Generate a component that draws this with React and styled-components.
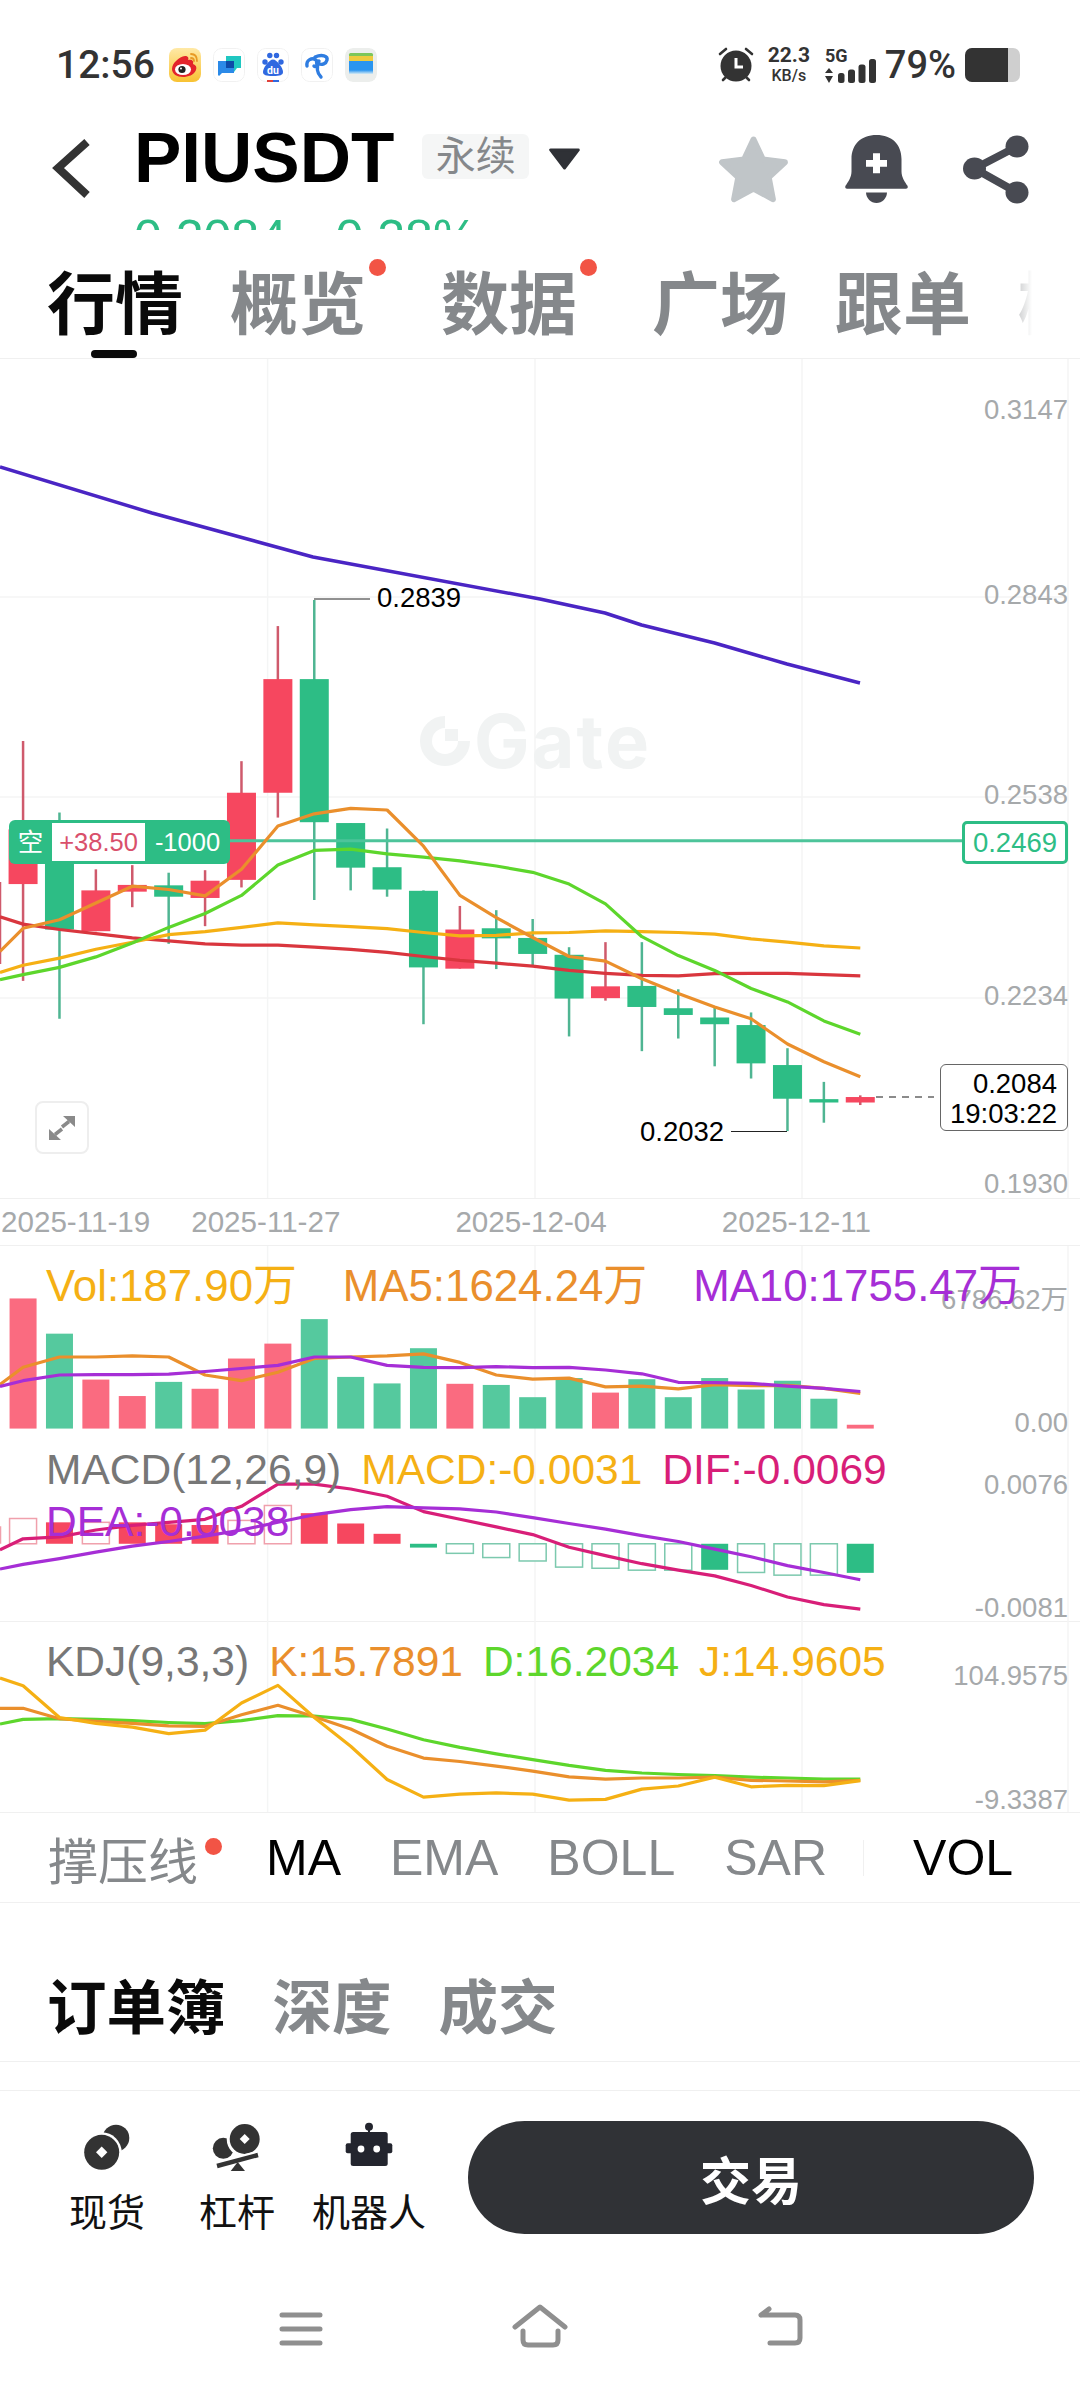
import styled, { createGlobalStyle } from 'styled-components'

const GlobalStyle = createGlobalStyle`
  html, body { margin: 0; padding: 0; background: #fff; }
  body { font-family: "Liberation Sans", "Noto Sans CJK SC", sans-serif; }
  * { box-sizing: border-box; }
`

const GREEN = '#2dbd85'
const RED = '#f6475f'
const ORANGE = '#ea8f2c'
const YELLOW = '#f5b014'
const LIME = '#5dd62c'
const PURPLE = '#a62ed6'
const MAGENTA = '#d81e78'
const GRID = '#f4f5f5'

// candle centres are evenly spaced, y values are read off the reference
const cx = (i) => 23.07 + 36.4 * i
const mainY = (v) => 560 + v / 2.376
const lowerY = (v) => 1220 + v / 2.613

const linePath = (first, ys, toY) =>
  `M0 ${toY(first)} ` + ys.map((v, i) => `L${cx(i).toFixed(1)} ${toY(v).toFixed(1)}`).join(' ')

// [high, bodyTop, bodyBottom, low, up]
const candles = [
  [430, 640, 770, 1000, 1],
  [600, 700, 878, 1090, 0],
  [735, 785, 882, 882, 1],
  [725, 772, 788, 825, 1],
  [743, 773, 800, 912, 0],
  [737, 762, 803, 870, 1],
  [478, 553, 760, 778, 1],
  [157, 283, 553, 612, 1],
  [95, 283, 623, 808, 0],
  [625, 625, 731, 785, 0],
  [638, 730, 783, 800, 0],
  [785, 786, 968, 1103, 0],
  [822, 878, 971, 971, 1],
  [832, 875, 899, 972, 0],
  [853, 898, 936, 965, 0],
  [920, 938, 1042, 1132, 0],
  [908, 1013, 1041, 1047, 1],
  [908, 1012, 1062, 1167, 0],
  [1020, 1065, 1081, 1137, 0],
  [1062, 1087, 1103, 1203, 0],
  [1075, 1105, 1196, 1232, 0],
  [1160, 1200, 1280, 1357, 0],
  [1240, 1281, 1289, 1337, 0],
  [1272, 1276, 1289, 1295, 1],
]

const mainLines = [
  { color: '#d9363e', first: 848, ys: [865, 878, 888, 898, 905, 912, 915, 915, 920, 925, 932, 942, 951, 958, 965, 975, 982, 987, 988, 983, 982, 982, 985, 988] },
  { color: YELLOW, first: 980, ys: [963, 946, 925, 908, 890, 883, 873, 862, 867, 871, 876, 885, 893, 892, 886, 885, 881, 883, 885, 889, 900, 908, 917, 922] },
  { color: LIME, first: 997, ys: [985, 968, 943, 910, 873, 840, 797, 725, 690, 687, 698, 706, 715, 727, 742, 770, 817, 895, 940, 975, 1018, 1050, 1095, 1127] },
  { color: ORANGE, first: 930, ys: [875, 855, 815, 775, 783, 798, 735, 632, 603, 590, 594, 680, 797, 850, 897, 942, 953, 995, 1030, 1062, 1090, 1150, 1192, 1228] },
]

const volTops = [205, 297, 417, 460, 423, 441, 362, 323, 259, 410, 427, 335, 428, 431, 463, 413, 451, 416, 463, 413, 443, 420, 467, 535]
const volRed = [0, 2, 3, 5, 6, 7, 12, 16, 23]
const volLines = [
  { color: ORANGE, first: 430, ys: [385, 358, 358, 355, 358, 405, 420, 398, 362, 358, 355, 350, 372, 405, 416, 413, 436, 434, 441, 430, 433, 432, 440, 453] },
  { color: PURPLE, first: 435, ys: [420, 405, 404, 404, 403, 396, 388, 380, 358, 358, 380, 385, 386, 383, 386, 385, 392, 402, 424, 425, 427, 434, 440, 448] },
]

// [edge, hollow]: edge is the end of the bar away from the zero line
const macdBars = [
  [780, 1], [790, 0], [790, 1], [790, 0], [795, 0], [797, 0], [785, 1], [746, 1], [766, 0], [793, 0], [820, 0],
  [856, 0], [871, 1], [882, 1], [891, 1], [907, 1], [910, 1], [915, 1], [915, 1], [914, 0], [921, 1], [928, 1], [928, 1], [922, 0],
]
const macdLines = [
  { color: MAGENTA, first: 862, ys: [833, 828, 810, 798, 790, 782, 748, 690, 690, 703, 722, 762, 782, 802, 822, 855, 877, 898, 915, 930, 955, 985, 1005, 1017] },
  { color: PURPLE, first: 912, ys: [900, 885, 868, 852, 840, 826, 810, 790, 770, 757, 749, 752, 755, 763, 778, 793, 808, 825, 840, 860, 880, 903, 921, 940] },
]
const kdjLines = [
  { color: LIME, first: 1317, ys: [1305, 1303, 1305, 1308, 1313, 1316, 1308, 1295, 1296, 1305, 1330, 1358, 1378, 1395, 1410, 1425, 1438, 1445, 1449, 1452, 1456, 1458, 1461, 1461] },
  { color: ORANGE, first: 1276, ys: [1276, 1303, 1310, 1315, 1322, 1323, 1293, 1268, 1298, 1330, 1375, 1406, 1415, 1427, 1440, 1455, 1461, 1458, 1458, 1456, 1464, 1466, 1468, 1464] },
  { color: YELLOW, first: 1197, ys: [1217, 1300, 1315, 1325, 1342, 1333, 1262, 1216, 1300, 1375, 1462, 1508, 1500, 1497, 1500, 1516, 1514, 1487, 1479, 1456, 1481, 1477, 1478, 1465] },
]

const Page = styled.div`
  width: 1080px;
  height: 2392px;
  overflow: hidden;
  display: flex;
  flex-direction: column;
  background: #fff;
`

/* status bar */
const StatusBar = styled.div`
  height: 120px;
  padding: 10px 60px 0 56px;
  display: flex;
  align-items: center;
  color: #333;
  font-family: Roboto, sans-serif;
`
const Clock = styled.span`
  font-size: 39px;
  font-weight: 500;
  margin-right: 14px;
`
const AppIcons = styled.div`
  display: flex;
  gap: 12px;
`
const AppIcon = styled.svg`
  width: 32px;
  height: 34px;
  border-radius: 8px;
`
const StatusRight = styled.div`
  margin-left: auto;
  display: flex;
  align-items: center;
`
const NetSpeed = styled.div`
  margin: 0 15px 0 14px;
  width: 42px;
  display: flex;
  flex-direction: column;
  align-items: center;
  font-weight: 700;
`
const SpeedValue = styled.span`
  font-size: 21px;
  line-height: 22px;
`
const SpeedUnit = styled.span`
  font-size: 16px;
  line-height: 20px;
  font-weight: 500;
`
const Battery = styled.div`
  width: 55px;
  height: 34px;
  border-radius: 7px;
  overflow: hidden;
  display: flex;
  background: #cfcfcf;
`
const BatteryFill = styled.div`
  width: 43px;
  background: #333;
`
const Percent = styled.span`
  font-size: 38px;
  font-weight: 500;
  margin: 0 9px 0 9px;
`

/* header */
const Header = styled.div`
  height: 110px;
  overflow: hidden;
  padding-left: 52px;
`
const TitleRow = styled.div`
  height: 93px;
  display: flex;
  align-items: flex-start;
`
const BackIcon = styled.svg`
  width: 40px;
  height: 64px;
  margin: 17px 42px 0 0;
`
const Title = styled.h1`
  margin: 2px 0 0;
  font-size: 71px;
  line-height: 71px;
  font-weight: 700;
  color: #000;
`
const Badge = styled.span`
  margin: 14px 0 0 28px;
  width: 107px;
  height: 45px;
  border-radius: 6px;
  background: #f5f6f6;
  color: #85888b;
  font-size: 40px;
  line-height: 45px;
  text-align: center;
`
const Caret = styled.svg`
  width: 33px;
  height: 22px;
  margin: 28px 0 0 19px;
`
const HeaderIcons = styled.div`
  margin: 15px 51px 0 auto;
  display: flex;
  gap: 55px;
`
const PriceRow = styled.div`
  display: flex;
  font-size: 50px;
  line-height: 50px;
  color: ${GREEN};
  padding-left: 82px;
  gap: 32px;
`

/* tabs */
const Tabs = styled.div`
  position: relative;
  height: 129px;
  padding: 41px 0 0 47px;
  display: flex;
  gap: 47px;
  overflow: hidden;
  border-bottom: 1px solid #f0f0f0;
`
const Tab = styled.span`
  position: relative;
  font-size: 68px;
  line-height: 68px;
  font-weight: 700;
  white-space: nowrap;
  color: ${(p) => (p.$active ? '#0a0a0a' : '#85888b')};
  padding-right: ${(p) => (p.$dot ? 28 : 0)}px;
`
const Dot = styled.i`
  position: absolute;
  top: ${(p) => p.$top}px;
  right: ${(p) => p.$right}px;
  width: 17px;
  height: 17px;
  border-radius: 50%;
  background: #f25445;
`
const Underline = styled.i`
  position: absolute;
  left: 91px;
  bottom: 0;
  width: 46px;
  height: 8px;
  border-radius: 4px;
  background: #0a0a0a;
`
const TabFade = styled.i`
  position: absolute;
  top: 0;
  bottom: 0;
  right: 0;
  width: 62px;
  background: linear-gradient(to right, rgba(255, 255, 255, 0.6), #fff 14px);
`

/* chart panes */
const Pane = styled.div`
  position: relative;
  height: ${(p) => p.$height}px;
  border-bottom: ${(p) => (p.$line ? `1px solid #f0f0f0` : 'none')};
`
const PaneSvg = styled.svg`
  position: absolute;
  left: 0;
  top: 0;
`
const AxisLabel = styled.span`
  position: absolute;
  right: 12px;
  top: ${(p) => p.$y}px;
  transform: translateY(-50%);
  font-size: 27.5px;
  line-height: 30px;
  color: #a6a9ab;
  white-space: nowrap;
`
const Extreme = styled.span`
  position: absolute;
  left: ${(p) => p.$x}px;
  top: ${(p) => p.$y}px;
  transform: translateY(-50%);
  font-size: 27.5px;
  line-height: 30px;
  color: #000;
`
const PositionTag = styled.div`
  position: absolute;
  left: 9px;
  top: 461px;
  width: 221px;
  height: 44px;
  padding: 3px 0;
  display: flex;
  border-radius: 6px;
  background: ${GREEN};
  color: #fff;
  font-size: 25.5px;
  line-height: 38px;
  text-align: center;
`
const TagSide = styled.span`
  width: 43px;
`
const TagPnl = styled.span`
  width: 93px;
  background: #fff;
  color: #d9506b;
`
const TagQty = styled.span`
  flex: 1;
`
const PriceTag = styled.div`
  position: absolute;
  left: 962px;
  top: 462px;
  width: 106px;
  height: 43px;
  border: 3px solid ${GREEN};
  border-radius: 5px;
  background: #fff;
  color: ${GREEN};
  font-size: 27.5px;
  line-height: 37px;
  text-align: center;
`
const LastPrice = styled.div`
  position: absolute;
  left: 940px;
  top: 705px;
  width: 128px;
  height: 67px;
  padding: 4px 10px 0 0;
  border: 1.5px solid #666;
  border-radius: 6px;
  background: #fff;
  color: #000;
  font-size: 27.5px;
  line-height: 29.5px;
  text-align: right;
`
const ExpandButton = styled.div`
  position: absolute;
  left: 35px;
  top: 742px;
  width: 54px;
  height: 53px;
  display: flex;
  align-items: center;
  justify-content: center;
  border: 2px solid #eeeeee;
  border-radius: 8px;
  background: #fff;
`
const Watermark = styled.div`
  position: absolute;
  left: 418px;
  top: 355px;
  display: flex;
  align-items: center;
  font-family: Inter, sans-serif;
  font-weight: 700;
  font-size: 74px;
  letter-spacing: 2px;
  line-height: 54px;
  color: #f1f3f3;
`
const DateRow = styled.div`
  height: 48px;
  padding: 3px 0 0 1px;
  display: flex;
  gap: 115px;
  border-top: 1px solid #f0f0f0;
  border-bottom: 1px solid #f0f0f0;
  font-size: 29.6px;
  line-height: 40px;
  color: #a6a9ab;
  white-space: nowrap;
  & > span:first-child {
    margin-right: -74px;
  }
`
const Legend = styled.div`
  position: relative;
  width: ${(p) => (p.$wide ? 1080 : 900)}px;
  padding: ${(p) => p.$top}px 0 0 46px;
  display: flex;
  flex-wrap: ${(p) => (p.$wide ? 'nowrap' : 'wrap')};
  column-gap: ${(p) => p.$gap}px;
  font-size: ${(p) => (p.$wide ? 43.8 : 42.5)}px;
  line-height: 52px;
  white-space: nowrap;
`
const LegendItem = styled.span`
  color: ${(p) => p.$color};
`

/* indicator switcher */
const IndicatorRow = styled.div`
  height: 91px;
  padding-left: 48px;
  display: flex;
  align-items: center;
  gap: 49px;
  border-top: 1px solid #f0f0f0;
  border-bottom: 1px solid #f0f0f0;
  font-size: 50px;
`
const Indicator = styled.span`
  position: relative;
  color: ${(p) => (p.$active ? '#000' : '#85888b')};
  margin-right: ${(p) => (p.$first ? 19 : 0)}px;
`
const Divider = styled.i`
  width: 1px;
  height: 36px;
  margin-left: -13px;
  background: #f0f0f0;
`

/* order book tabs */
const OrderTabs = styled.div`
  height: 159px;
  padding: 41px 0 0 47px;
  display: flex;
  align-items: center;
  gap: 47px;
  border-bottom: 1px solid #f0f0f0;
  font-size: 59.5px;
  font-weight: 700;
`
const OrderTab = styled.span`
  color: ${(p) => (p.$active ? '#0a0a0a' : '#85888b')};
`
const Spacer = styled.div`
  height: 29px;
  border-bottom: 1px solid #f0f0f0;
`

/* bottom actions */
const BottomBar = styled.div`
  height: 199px;
  padding: 30px 0 0 42px;
  display: flex;
  align-items: flex-start;
`
const ActionGrid = styled.div`
  display: grid;
  grid-template-columns: 130px 130px 134px;
`
const Action = styled.div`
  display: flex;
  flex-direction: column;
  align-items: center;
  font-size: 38px;
  line-height: 38px;
  color: #111;
  gap: 19px;
`
const ActionIcon = styled.svg`
  width: 60px;
  height: 54px;
`
const TradeButton = styled.button`
  margin-left: 32px;
  width: 566px;
  height: 113px;
  border: 0;
  border-radius: 57px;
  background: #303236;
  color: #fff;
  font-family: inherit;
  font-size: 51px;
  font-weight: 700;
`

/* system nav */
const NavBar = styled.div`
  height: 102px;
  padding: 14px 0 0 278px;
  display: flex;
  gap: 188px;
`
const NavIcon = styled.svg`
  height: 46px;
  width: ${(p) => p.$width}px;
  fill: none;
  stroke: #8f8f8f;
  stroke-width: 5;
  stroke-linecap: round;
  stroke-linejoin: round;
`

function VerticalGrid({ top, bottom }) {
  return [267.6, 535, 802, 1068].map((x) => (
    <line key={x} x1={x} x2={x} y1={top} y2={bottom} stroke={GRID} strokeWidth="1.5" />
  ))
}

function Series({ lines, toY }) {
  return lines.map((l) => (
    <path key={l.color} d={linePath(l.first, l.ys, toY)} fill="none" stroke={l.color} strokeWidth="3.2" strokeLinejoin="round" />
  ))
}

function MainChart() {
  return (
    <PaneSvg width="1080" height="839" viewBox="0 359 1080 839">
      <VerticalGrid top={359} bottom={1198} />
      {[597, 797, 998].map((y) => (
        <line key={y} x1="0" x2="1068" y1={y} y2={y} stroke={GRID} strokeWidth="1.5" />
      ))}
      <line x1="0" x2="0" y1={mainY(765)} y2={mainY(960)} stroke="#cf5a6c" strokeWidth="2.5" />
      {candles.map(([high, top, bottom, low, up], i) => {
        const color = up ? RED : GREEN
        return (
          <g key={i}>
            <line x1={cx(i)} x2={cx(i)} y1={mainY(high)} y2={mainY(low)} stroke={up ? '#cf5a6c' : '#4fb592'} strokeWidth="2.5" />
            <rect x={cx(i) - 14.5} width="29" y={mainY(top)} height={(bottom - top) / 2.376} fill={color} />
          </g>
        )
      })}
      <line x1="230" x2="962" y1="840.7" y2="840.7" stroke="#4dc49a" strokeWidth="3" />
      <path d="M0 467 L152 513 L313 557 L540 599 L605 613 L641.6 625 L714.6 643 L787 664 L860 683" fill="none" stroke="#4a25c4" strokeWidth="3.5" strokeLinejoin="round" />
      <Series lines={mainLines} toY={mainY} />
      <path d="M314 599 H370 M731 1131.5 H787" stroke="#222" strokeWidth="1" fill="none" />
      <line x1="876" x2="934" y1="1097" y2="1097" stroke="#666" strokeWidth="1.5" strokeDasharray="7 6" />
    </PaneSvg>
  )
}

function VolChart() {
  const base = lowerY(545)
  return (
    <PaneSvg width="1080" height="194" viewBox="0 1246 1080 194">
      <VerticalGrid top={1246} bottom={1440} />
      {volTops.map((t, i) => (
        <rect key={i} x={cx(i) - 13.5} width="27" y={lowerY(t)} height={base - lowerY(t)} fill={volRed.includes(i) ? '#fa6b80' : '#55c99e'} />
      ))}
      <Series lines={volLines} toY={lowerY} />
    </PaneSvg>
  )
}

function MacdChart() {
  const zero = lowerY(846)
  return (
    <PaneSvg width="1080" height="182" viewBox="0 1440 1080 182">
      <VerticalGrid top={1440} bottom={1622} />
      {macdBars.map(([edge, hollow], i) => {
        const y = lowerY(edge)
        const up = y < zero
        const color = up ? RED : GREEN
        return (
          <rect
            key={i}
            x={cx(i) - 13.5}
            width="27"
            y={Math.min(y, zero)}
            height={Math.abs(y - zero)}
            fill={hollow ? '#fff' : color}
            stroke={hollow ? (up ? '#f0a0ac' : '#7cc9ae') : 'none'}
            strokeWidth="1.5"
          />
        )
      })}
      <line x1="0.5" x2="0.5" y1={lowerY(800)} y2={zero} stroke="#f0a0ac" strokeWidth="1.5" />
      <Series lines={macdLines} toY={lowerY} />
    </PaneSvg>
  )
}

function KdjChart() {
  return (
    <PaneSvg width="1080" height="190" viewBox="0 1622 1080 190">
      <VerticalGrid top={1622} bottom={1812} />
      <Series lines={kdjLines} toY={lowerY} />
    </PaneSvg>
  )
}

function WeiboIcon() {
  return (
    <AppIcon viewBox="0 0 32 34">
      <defs>
        <linearGradient id="wb" x1="0" y1="0" x2="0" y2="1">
          <stop offset="0" stopColor="#ffe9a6" />
          <stop offset="1" stopColor="#f8c232" />
        </linearGradient>
      </defs>
      <rect width="32" height="34" fill="url(#wb)" />
      <path d="M3 21 C3 15 10 9 16 8 C19 8 20 10 19 12 C23 11 25 13 24 16 C27 17 28 19 27 22 C25 27 19 29 14 29 C8 29 3 26 3 21Z" fill="#e3242b" />
      <ellipse cx="14" cy="21.5" rx="8" ry="5.5" fill="#fff" />
      <circle cx="13" cy="21.5" r="3.6" fill="#222" />
      <circle cx="12" cy="20.5" r="1" fill="#fff" />
      <path d="M22 6 C26 6 28 9 28 13 M22 10 C24 10 25 11 25 13" fill="none" stroke="#e89a25" strokeWidth="1.8" strokeLinecap="round" />
    </AppIcon>
  )
}

function ChatIcon() {
  return (
    <AppIcon viewBox="0 0 32 34">
      <rect x="0.5" y="0.5" width="31" height="33" rx="8" fill="#fff" stroke="#f1f1f1" />
      <path d="M13 8 H28 V20 H24 L21 24 V20 H13Z" fill="#1fc7c1" />
      <path d="M5 13 H21 V25 H9 L6 28 L5 27Z" fill="#2b8ae8" />
      <rect x="13" y="13" width="8" height="7" fill="#0d4aa8" />
    </AppIcon>
  )
}

function BaiduIcon() {
  return (
    <AppIcon viewBox="0 0 32 34">
      <rect x="0.5" y="0.5" width="31" height="33" rx="8" fill="#fff" stroke="#f1f1f1" />
      <circle cx="8" cy="14" r="2.7" fill="#3068e0" />
      <circle cx="12.8" cy="7.5" r="2.7" fill="#3068e0" />
      <circle cx="19.5" cy="7.5" r="2.7" fill="#3068e0" />
      <circle cx="24" cy="14" r="2.7" fill="#3068e0" />
      <path d="M16 11.5 C20 11.5 26 20 26 24 C26 27 23 28 16 28 C9 28 6 27 6 24 C6 20 12 11.5 16 11.5Z" fill="#3068e0" />
      <text x="16" y="25.5" textAnchor="middle" fontSize="10.5" fontWeight="700" fill="#fff">du</text>
      <rect x="10" y="32" width="6" height="2" fill="#e0403a" />
      <rect x="16" y="32" width="6" height="2" fill="#3068e0" />
    </AppIcon>
  )
}

function TelecomIcon() {
  return (
    <AppIcon viewBox="0 0 32 34">
      <rect x="0.5" y="0.5" width="31" height="33" rx="8" fill="#fff" stroke="#f1f1f1" />
      <path d="M6 18 C5 12 11 9 15 12 C18 15 15 20 13 18 M14 9 C21 6 27 8 26 12 C25 16 21 17 18 16 M18 13 C15 20 16 25 20 29" fill="none" stroke="#2f7de1" strokeWidth="3.4" strokeLinecap="round" />
    </AppIcon>
  )
}

function WalletIcon() {
  return (
    <AppIcon viewBox="0 0 32 34">
      <defs>
        <linearGradient id="wl" x1="0" y1="0" x2="0" y2="1">
          <stop offset="0" stopColor="#2a95f0" />
          <stop offset="0.7" stopColor="#2a95f0" />
          <stop offset="1" stopColor="#d5ebf5" />
        </linearGradient>
      </defs>
      <rect width="32" height="34" rx="8" fill="#eceeec" />
      <rect x="4" y="5" width="24" height="5" rx="1.5" fill="#7dc65a" />
      <rect x="4" y="8" width="24" height="6" fill="#eecb3e" />
      <rect x="4" y="13" width="24" height="13" fill="url(#wl)" />
    </AppIcon>
  )
}

function AlarmIcon() {
  return (
    <svg width="36" height="36" viewBox="0 0 36 36">
      <circle cx="18" cy="19" r="15.5" fill="#333" />
      <path d="M18 11 V20 H25" fill="none" stroke="#fff" strokeWidth="3" />
      <path d="M2 7 L8 2 M34 7 L28 2 M5 33 L8 30 M31 33 L28 30" stroke="#333" strokeWidth="2.6" strokeLinecap="round" />
    </svg>
  )
}

function SignalIcon() {
  return (
    <svg width="51" height="36" viewBox="0 0 51 36">
      <text x="0" y="15" fontFamily="Roboto, sans-serif" fontSize="18" fontWeight="700" fill="#333">5G</text>
      <path d="M4 21 L8 26 H0Z M4 36 L0 29 H8Z" fill="#333" />
      <rect x="13" y="26" width="6.5" height="10" rx="2.5" fill="#333" />
      <rect x="23" y="22.5" width="7" height="13.5" rx="2.5" fill="#333" />
      <rect x="33.5" y="17.5" width="7" height="18.5" rx="2.5" fill="#333" />
      <rect x="44" y="12" width="7" height="24" rx="2.5" fill="#333" />
    </svg>
  )
}

function StarIcon() {
  return (
    <svg width="73" height="69" viewBox="0 3.5 73 67">
      <path
        d="M36.5 7 L45.9 27.1 L67.9 29.8 L51.7 44.9 L55.9 66.7 L36.5 56 L17.1 66.7 L21.3 44.9 L5.1 29.8 L27.1 27.1Z"
        fill="#c0c5c8"
        stroke="#c0c5c8"
        strokeWidth="6"
        strokeLinejoin="round"
      />
    </svg>
  )
}

function BellIcon() {
  return (
    <svg width="63" height="69" viewBox="0 0 63 72" preserveAspectRatio="none">
      <path d="M31.5 0 C16 0 6.5 10 6.5 25 V38 C6.5 44 3 49 0.5 53 Q-0.5 56 2 56 H61 Q63.5 56 62.5 53 C60 49 56.5 44 56.5 38 V25 C56.5 10 47 0 31.5 0Z" fill="#484a52" />
      <path d="M21 60 H42 C42 66 37 71 31.5 71 C26 71 21 66 21 60Z" fill="#484a52" />
      <path d="M21 29.5 H42 M31.5 19 V40" stroke="#fff" strokeWidth="7" />
    </svg>
  )
}

function ShareIcon() {
  return (
    <svg width="66" height="69" viewBox="0 0 66 72" preserveAspectRatio="none">
      <path d="M54 12 L11.5 35 L54 60" fill="none" stroke="#484a52" strokeWidth="8" />
      <circle cx="54" cy="12" r="11.5" fill="#484a52" />
      <circle cx="11.5" cy="35" r="11.5" fill="#484a52" />
      <circle cx="54" cy="60" r="11.5" fill="#484a52" />
    </svg>
  )
}

function SpotIcon() {
  return (
    <ActionIcon viewBox="0 0 60 54">
      <circle cx="39" cy="17" r="13.3" fill="#333" />
      <circle cx="24.7" cy="31.3" r="20" fill="#fff" />
      <circle cx="24.7" cy="31.3" r="17.5" fill="#333" />
      <path d="M24.7 25.6 L30.4 31.3 L24.7 37 L19 31.3Z" fill="#fff" />
    </ActionIcon>
  )
}

function LeverIcon() {
  return (
    <ActionIcon viewBox="0 0 60 54">
      <circle cx="16.3" cy="27.3" r="10.5" fill="#333" />
      <circle cx="37.7" cy="18" r="18" fill="#fff" />
      <circle cx="37.7" cy="18" r="15" fill="#333" />
      <path d="M37.7 13 L42.7 18 L37.7 23 L32.7 18Z" fill="#fff" />
      <path d="M6 46 L55 33" stroke="#fff" strokeWidth="9" />
      <path d="M10 45 L51 34" stroke="#333" strokeWidth="4.5" />
      <path d="M23.7 50 H38 L30.7 41Z" fill="#333" />
    </ActionIcon>
  )
}

function RobotIcon() {
  return (
    <ActionIcon viewBox="0 0 60 54">
      <circle cx="30" cy="5.7" r="4" fill="#23252e" />
      <rect x="29" y="6" width="2" height="6" fill="#23252e" />
      <rect x="11.7" y="11" width="37" height="34" rx="2.5" fill="#23252e" />
      <rect x="6.7" y="22.3" width="46.6" height="10" rx="2" fill="#23252e" />
      <circle cx="22" cy="28" r="3.4" fill="#fff" />
      <circle cx="37.7" cy="28" r="3.4" fill="#fff" />
    </ActionIcon>
  )
}

export default function App() {
  return (
    <Page>
      <GlobalStyle />
      <StatusBar>
        <Clock>12:56</Clock>
        <AppIcons>
          <WeiboIcon />
          <ChatIcon />
          <BaiduIcon />
          <TelecomIcon />
          <WalletIcon />
        </AppIcons>
        <StatusRight>
          <AlarmIcon />
          <NetSpeed>
            <SpeedValue>22.3</SpeedValue>
            <SpeedUnit>KB/s</SpeedUnit>
          </NetSpeed>
          <SignalIcon />
          <Percent>79%</Percent>
          <Battery>
            <BatteryFill />
          </Battery>
        </StatusRight>
      </StatusBar>

      <Header>
        <TitleRow>
          <BackIcon viewBox="0 0 40 64">
            <path d="M35 5 L6 31 L35 58" fill="none" stroke="#333" strokeWidth="8" />
          </BackIcon>
          <Title>PIUSDT</Title>
          <Badge>永续</Badge>
          <Caret viewBox="0 0 33 23">
            <path d="M2 2 H31 L16.5 21Z" fill="#2f3136" stroke="#2f3136" strokeWidth="3" strokeLinejoin="round" />
          </Caret>
          <HeaderIcons>
            <StarIcon />
            <BellIcon />
            <ShareIcon />
          </HeaderIcons>
        </TitleRow>
        <PriceRow>
          <span>0.2084</span>
          <span>-0.28%</span>
        </PriceRow>
      </Header>

      <Tabs>
        <Tab $active>行情</Tab>
        <Tab $dot>
          概览
          <Dot $top={-12} $right={8} />
        </Tab>
        <Tab $dot>
          数据
          <Dot $top={-12} $right={8} />
        </Tab>
        <Tab>广场</Tab>
        <Tab>跟单</Tab>
        <Tab>榜单</Tab>
        <Underline />
        <TabFade />
      </Tabs>

      <Pane $height={839}>
        <MainChart />
        <Watermark>
          <svg width="56" height="52" viewBox="0 0 56 52">
            <path d="M27 7 A19 19 0 1 0 46 26" fill="none" stroke="#f1f3f3" strokeWidth="12" />
            <rect x="27" y="14" width="13" height="12" fill="#f1f3f3" />
          </svg>
          Gate
        </Watermark>
        <AxisLabel $y={51}>0.3147</AxisLabel>
        <AxisLabel $y={236}>0.2843</AxisLabel>
        <AxisLabel $y={436}>0.2538</AxisLabel>
        <AxisLabel $y={637}>0.2234</AxisLabel>
        <AxisLabel $y={825}>0.1930</AxisLabel>
        <Extreme $x={377} $y={239}>0.2839</Extreme>
        <Extreme $x={640} $y={773}>0.2032</Extreme>
        <PositionTag>
          <TagSide>空</TagSide>
          <TagPnl>+38.50</TagPnl>
          <TagQty>-1000</TagQty>
        </PositionTag>
        <PriceTag>0.2469</PriceTag>
        <LastPrice>
          0.2084
          <br />
          19:03:22
        </LastPrice>
        <ExpandButton>
          <svg width="28" height="26" viewBox="0 0 28 26">
            <path d="M27 1 H15 L27 12Z M1 25 H13 L1 14Z" fill="#8a8a8a" />
            <path d="M21 6.5 L14 12 M7 19.5 L14 14" stroke="#8a8a8a" strokeWidth="3.5" />
          </svg>
        </ExpandButton>
      </Pane>

      <DateRow>
        <span>2025-11-19</span>
        <span>2025-11-27</span>
        <span>2025-12-04</span>
        <span>2025-12-11</span>
      </DateRow>

      <Pane $height={194}>
        <VolChart />
        <AxisLabel $y={54}>6786.62万</AxisLabel>
        <AxisLabel $y={177}>0.00</AxisLabel>
        <Legend $top={14} $gap={46} $wide>
          <LegendItem $color={YELLOW}>Vol:187.90万</LegendItem>
          <LegendItem $color={ORANGE}>MA5:1624.24万</LegendItem>
          <LegendItem $color={PURPLE}>MA10:1755.47万</LegendItem>
        </Legend>
      </Pane>

      <Pane $height={182} $line>
        <MacdChart />
        <AxisLabel $y={45}>0.0076</AxisLabel>
        <AxisLabel $y={168}>-0.0081</AxisLabel>
        <Legend $top={4} $gap={20}>
          <LegendItem $color="#777">MACD(12,26,9)</LegendItem>
          <LegendItem $color={YELLOW}>MACD:-0.0031</LegendItem>
          <LegendItem $color={MAGENTA}>DIF:-0.0069</LegendItem>
          <LegendItem $color={PURPLE}>DEA:-0.0038</LegendItem>
        </Legend>
      </Pane>

      <Pane $height={190}>
        <KdjChart />
        <AxisLabel $y={54}>104.9575</AxisLabel>
        <AxisLabel $y={178}>-9.3387</AxisLabel>
        <Legend $top={14} $gap={20}>
          <LegendItem $color="#777">KDJ(9,3,3)</LegendItem>
          <LegendItem $color={ORANGE}>K:15.7891</LegendItem>
          <LegendItem $color={LIME}>D:16.2034</LegendItem>
          <LegendItem $color={YELLOW}>J:14.9605</LegendItem>
        </Legend>
      </Pane>

      <IndicatorRow>
        <Indicator $first>
          撑压线
          <Dot $top={16} $right={-24} />
        </Indicator>
        <Indicator $active>MA</Indicator>
        <Indicator>EMA</Indicator>
        <Indicator>BOLL</Indicator>
        <Indicator>SAR</Indicator>
        <Divider />
        <Indicator $active>VOL</Indicator>
      </IndicatorRow>

      <OrderTabs>
        <OrderTab $active>订单簿</OrderTab>
        <OrderTab>深度</OrderTab>
        <OrderTab>成交</OrderTab>
      </OrderTabs>
      <Spacer />

      <BottomBar>
        <ActionGrid>
          <Action>
            <SpotIcon />
            现货
          </Action>
          <Action>
            <LeverIcon />
            杠杆
          </Action>
          <Action>
            <RobotIcon />
            机器人
          </Action>
        </ActionGrid>
        <TradeButton>交易</TradeButton>
      </BottomBar>

      <NavBar>
        <NavIcon $width={46} viewBox="0 0 46 46">
          <path d="M4 11 H42 M4 25 H42 M4 39 H42" />
        </NavIcon>
        <NavIcon $width={56} viewBox="0 0 56 46">
          <path d="M3 23 L28 3 L53 23 M11 27 V36 Q11 41 16 41 H41 Q46 41 46 36 V27" />
        </NavIcon>
        <NavIcon $width={50} viewBox="0 0 50 46">
          <path d="M5 11 H39 Q44 11 44 16 V34 Q44 39 39 39 H14 M5 11 L13 5" />
        </NavIcon>
      </NavBar>
    </Page>
  )
}
